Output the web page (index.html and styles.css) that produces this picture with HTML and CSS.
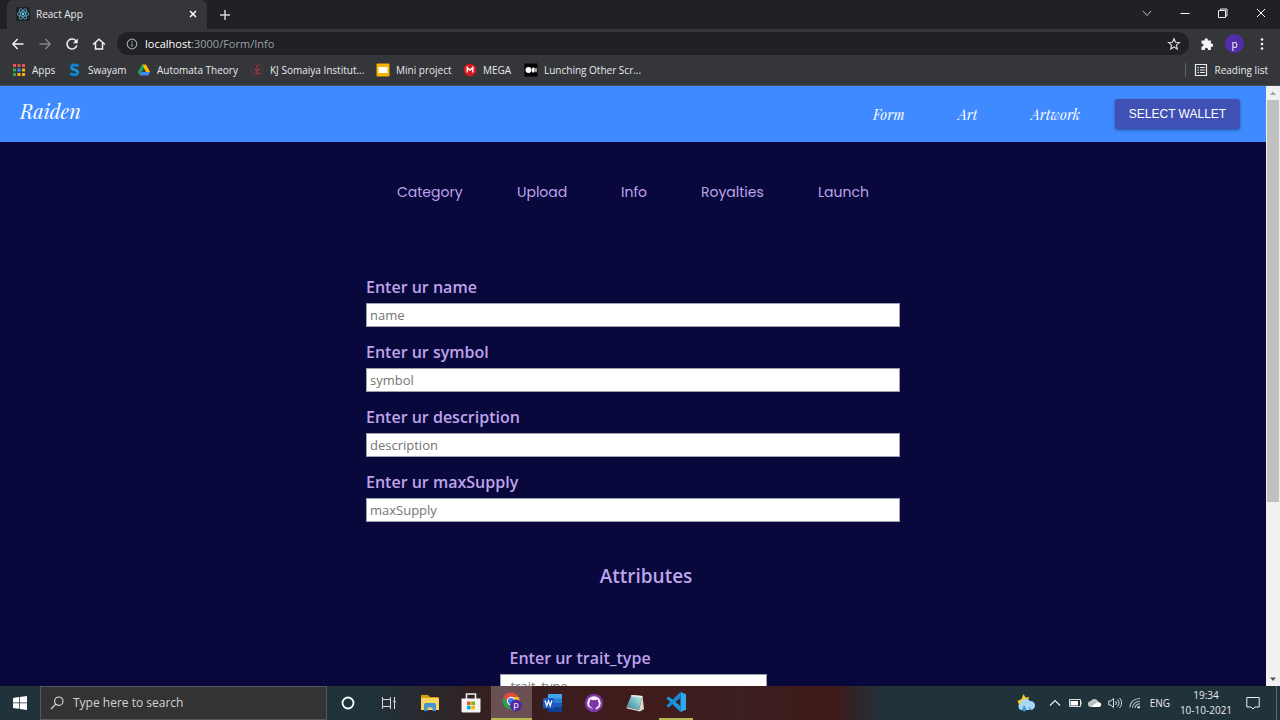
FILE: index.html
```html
<!DOCTYPE html>
<html lang="en">
<head>
<meta charset="utf-8">
<title>React App</title>
<link rel="stylesheet" href="styles.css">
</head>
<body>
<div class="tabstrip">
  <div class="tab">
    <svg class="i14" viewBox="0 0 14 14"><rect width="14" height="14" rx="1" fill="#20232a"/><g fill="none" stroke="#61bfd6" stroke-width=".7"><ellipse cx="7" cy="7" rx="5.8" ry="2.3"/><ellipse cx="7" cy="7" rx="5.8" ry="2.3" transform="rotate(60 7 7)"/><ellipse cx="7" cy="7" rx="5.8" ry="2.3" transform="rotate(120 7 7)"/></g><circle cx="7" cy="7" r="1.2" fill="#61dafb"/></svg>
    <span class="tab-title">React App</span>
    <button class="icon-btn" aria-label="Close tab"><svg class="i10" viewBox="0 0 10 10"><path d="M2 2l6 6M8 2l-6 6" stroke="#fff" stroke-width="1.5"/></svg></button>
  </div>
  <button class="icon-btn newtab" aria-label="New tab"><svg class="i14" viewBox="0 0 14 14"><path d="M7 2v10M2 7h10" stroke="#d0d1d3" stroke-width="1.5"/></svg></button>
  <div class="window-btns">
    <button class="icon-btn" aria-label="Search tabs"><svg class="i14" viewBox="0 0 14 14"><path d="M3 5l4 4.500 4-4.500" fill="none" stroke="#bbb"/></svg></button>
    <button class="icon-btn" aria-label="Minimize"><svg class="i14" viewBox="0 0 14 14"><path d="M2.500 7.500h9" stroke="#fff"/></svg></button>
    <button class="icon-btn" aria-label="Restore"><svg class="i14" viewBox="0 0 14 14"><path d="M2.500 4.500h7V11.500h-7zM4.500 4.500v-1.500h6.500V10H9.500" fill="none" stroke="#eee"/></svg></button>
    <button class="icon-btn" aria-label="Close"><svg class="i14" viewBox="0 0 14 14"><path d="M3 3l8 8M11 3l-8 8" stroke="#fff"/></svg></button>
  </div>
</div>
<div class="toolbar">
  <div class="nav-btns">
    <button class="icon-btn" aria-label="Back"><svg class="i14" viewBox="0 0 14 14"><path d="M12.500 7H2M6.700 2L1.800 7l4.900 5" fill="none" stroke="#f1f3f4" stroke-width="1.400"/></svg></button>
    <button class="icon-btn" aria-label="Forward"><svg class="i14" viewBox="0 0 14 14"><path d="M1.500 7H12M7.300 2l4.900 5-4.900 5" fill="none" stroke="#85878a" stroke-width="1.400"/></svg></button>
    <button class="icon-btn" aria-label="Reload"><svg class="i14" viewBox="0 0 14 14"><path d="M11.800 8.500A5 5 0 1 1 10.800 3.700" fill="none" stroke="#f1f3f4" stroke-width="1.500"/><path d="M12.700 1.500v4.700H8z" fill="#f1f3f4"/></svg></button>
    <button class="icon-btn" aria-label="Home"><svg class="i14" viewBox="0 0 14 14"><path d="M1 7.500l6-5.300 6 5.300M3.500 6v6h7V6" fill="none" stroke="#f1f3f4" stroke-width="1.500"/></svg></button>
  </div>
  <div class="address">
    <svg class="i14" viewBox="0 0 14 14"><circle cx="7" cy="7" r="4.800" fill="none" stroke="#9aa0a6" stroke-width="1.200"/><path d="M7 6.200v3.600M7 4v1.200" stroke="#9aa0a6" stroke-width="1.200"/></svg>
    <span class="url"><span class="host">localhost</span>:3000/Form/Info</span>
    <button class="icon-btn" aria-label="Bookmark"><svg class="i14" viewBox="0 0 14 14"><path d="M7 1.800l1.500 3.500 3.900.3-3 2.500.9 3.800L7 9.900l-3.300 2 .9-3.800-3-2.500 3.900-.3z" fill="none" stroke="#d5d6d8" stroke-width="1.200"/></svg></button>
  </div>
  <div class="tool-btns">
    <button class="icon-btn" aria-label="Extensions"><svg class="i14" viewBox="0 0 14 14"><path d="M1.500 3.500h3V3a1.700 1.700 0 0 1 3.400 0v.500h3v3h.6a1.700 1.700 0 0 1 0 3.400h-.6v3H8v-.5a1.600 1.600 0 0 0-3.200 0v.5H1.500V9.500H2a1.500 1.500 0 0 0 0-3h-.5z" fill="#f4f5f6"/></svg></button>
    <button class="avatar" aria-label="Profile">p</button>
    <button class="icon-btn" aria-label="Menu"><svg class="i14" viewBox="0 0 14 14"><g fill="#f1f3f4"><circle cx="7" cy="2.500" r="1.300"/><circle cx="7" cy="7" r="1.300"/><circle cx="7" cy="11.500" r="1.300"/></g></svg></button>
  </div>
</div>
<div class="bookmarks">
  <a class="mark" href="#"><svg class="i14" viewBox="0 0 14 14"><path d="M1 1h3v3H1zM5.500 1h3v3h-3zM10 1h3v3h-3z" fill="#e2574c"/><path d="M1 5.500h3v3H1z" fill="#34a853"/><path d="M5.500 5.500h3v3h-3z" fill="#4285f4"/><path d="M10 5.500h3v3h-3zM5.500 10h3v3h-3zM10 10h3v3h-3z" fill="#f4b400"/><path d="M1 10h3v3H1z" fill="#34a853"/></svg>Apps</a>
  <a class="mark" href="#"><svg class="i14" viewBox="0 0 14 14"><path d="M10.500 3.300C9 1.500 3.500 1.200 3.500 4.200c0 3.400 6.300 2 6.300 5.100 0 3-5 3-7.600 1.200" fill="none" stroke="#0f83d0" stroke-width="2.900"/><path d="M3.500 4.500C3.800 7.500 9 6.200 9.300 9" fill="none" stroke="#27b3e8"/></svg>Swayam</a>
  <a class="mark" href="#"><svg class="i14" viewBox="0 0 14 14"><path d="M5 1.500h4l4.200 7.500H9z" fill="#fbbc04"/><path d="M5 1.500L.800 9l2 3.500L7 5z" fill="#1ea362"/><path d="M4.800 9h8.400l-2 3.500H2.800z" fill="#4285f4"/></svg>Automata Theory</a>
  <a class="mark" href="#"><svg class="i14" viewBox="0 0 14 14"><circle cx="7" cy="7" r="6" fill="none" stroke="#6c3539" stroke-dasharray="2 1"/><path d="M7 2v9M3.500 10.500h7M4.500 5.500c0 2.500 5 2.500 5 0" stroke="#96383d" fill="none" stroke-width="1.200"/></svg>KJ Somaiya Institut...</a>
  <a class="mark" href="#"><svg class="i14" viewBox="0 0 14 14"><rect x=".5" y=".5" width="13" height="13" rx="1" fill="#f4b400"/><rect x="2.500" y="4" width="9" height="6" fill="#fff"/></svg>Mini project</a>
  <a class="mark" href="#"><svg class="i14" viewBox="0 0 14 14"><circle cx="7" cy="7" r="6.200" fill="#d9171e"/><path d="M4.200 9.500v-5L7 7.300l2.800-2.800v5" fill="none" stroke="#fff" stroke-width="1.400"/></svg>MEGA</a>
  <a class="mark" href="#"><svg class="i14" viewBox="0 0 14 14"><path d="M.5.5h13v13H.5z" fill="#000"/><g fill="#fff"><circle cx="4.500" cy="7" r="3"/><ellipse cx="9.300" cy="7" rx="1.500" ry="2.800"/><ellipse cx="12" cy="7" rx=".7" ry="2.500"/></g></svg>Lunching Other Scr...</a>
  <a class="mark reading" href="#"><svg class="i14" viewBox="0 0 14 14"><path d="M1.500 1.500h11v11h-11zM3.500 4.500H5M6 4.500h4.800M3.500 7H5M6 7h4.800M3.500 9.500H5M6 9.500h4.800" fill="none" stroke="#e8eaed" stroke-width="1.200"/></svg>Reading list</a>
</div>
<div class="viewport">
  <div class="page">
    <header class="site-header">
      <a class="brand" href="#">Raiden</a>
      <nav class="site-nav"><a href="#">Form</a><a href="#">Art</a><a href="#">Artwork</a></nav>
      <button class="wallet">SELECT WALLET</button>
    </header>
    <nav class="steps"><a href="#">Category</a><a href="#">Upload</a><a href="#">Info</a><a href="#">Royalties</a><a href="#">Launch</a></nav>
    <form class="form">
      <div class="field"><label for="name">Enter ur name</label><input id="name" placeholder="name"></div>
      <div class="field"><label for="symbol">Enter ur symbol</label><input id="symbol" placeholder="symbol"></div>
      <div class="field"><label for="description">Enter ur description</label><input id="description" placeholder="description"></div>
      <div class="field"><label for="supply">Enter ur maxSupply</label><input id="supply" placeholder="maxSupply"></div>
      <h2 class="attributes">Attributes</h2>
      <div class="field trait"><label for="trait">Enter ur trait_type</label><input id="trait" placeholder="trait_type"></div>
    </form>
  </div>
  <div class="scrollbar">
    <svg class="arrow" viewBox="0 0 14 14"><path d="M4 9l3-3.500L10 9z" fill="#a3a3a3"/></svg>
    <div class="thumb"></div>
    <svg class="arrow" viewBox="0 0 14 14"><path d="M4 5.500L7 9l3-3.500z" fill="#505050"/></svg>
  </div>
</div>
<div class="taskbar">
  <button class="task start" aria-label="Start"><svg class="i14" viewBox="0 0 14 14"><path d="M0 2l6-.9v5.500H0zM6.700 1L14 0v6.600H6.700zM0 7.300h6v5.500L0 12zM6.700 7.300H14V14l-7.300-1z" fill="#fff"/></svg></button>
  <label class="search"><svg class="i14" viewBox="0 0 14 14"><circle cx="8.800" cy="5.200" r="4.200" fill="none" stroke="#ddd" stroke-width="1.100"/><path d="M5.700 8.200L1 13" stroke="#ddd" stroke-width="1.100"/></svg><input placeholder="Type here to search" aria-label="Search"></label>
  <div class="apps">
    <button class="task" aria-label="Cortana"><svg class="i20" viewBox="0 0 20 20"><circle cx="10" cy="10" r="5.500" fill="none" stroke="#fff" stroke-width="1.800"/></svg></button>
    <button class="task" aria-label="Task view"><svg class="i20" viewBox="0 0 20 20"><path d="M3.500 4v2.500h8V4M3.500 16v-2.500h8V16M3.500 6.500v7M11.500 6.500v7M15.500 4v3M15.500 10v6" fill="none" stroke="#ddd"/><path d="M14.500 7.500h2v2h-2z" fill="#fff"/></svg></button>
    <button class="task" aria-label="File Explorer"><svg class="i20" viewBox="0 0 20 20"><path d="M1 2h7l2 2h8.500v4H1z" fill="#d99b14"/><path d="M1 5h18v12H1z" fill="#fcd462"/><path d="M4 18v-7l1.500-1h9l1.500 1v7h-3.500v-3.500h-5V18z" fill="#4595d1"/></svg></button>
    <button class="task" aria-label="Microsoft Store"><svg class="i20" viewBox="0 0 20 20"><path d="M5.500 6V1h9v5" fill="none" stroke="#eee" stroke-width="1.600"/><path d="M.500 5.500h19V18a1.500 1.500 0 0 1-1.500 1.500H2A1.500 1.500 0 0 1 .500 18z" fill="#f3f3f3"/><path d="M6 8.500h3.600v3.600H6z" fill="#f25022"/><path d="M10.300 8.500H14v3.600h-3.700z" fill="#7fba00"/><path d="M6 12.800h3.600v3.600H6z" fill="#00a4ef"/><path d="M10.300 12.800H14v3.600h-3.700z" fill="#ffb900"/></svg></button>
    <button class="task active" aria-label="Chrome"><svg class="i20" viewBox="0 0 20 20"><path d="M9 9L1.600 4.800A8.500 8.500 0 0 0 8.500 17.500L12 11z" fill="#2d9d4e"/><path d="M1.600 4.800A8.500 8.500 0 0 1 16.500 5H9L5 10z" fill="#e24a3b"/><path d="M16.500 5H9l3.500 6L8.500 17.500A8.500 8.500 0 0 0 16.500 5z" fill="#fbc116"/><circle cx="9" cy="9" r="4.200" fill="#fff"/><circle cx="9" cy="9" r="3.300" fill="#4285f4"/><circle cx="14" cy="13.500" r="6" fill="#51289e"/><text x="14" y="16" class="mini">p</text></svg></button>
    <button class="task" aria-label="Word"><svg class="i20" viewBox="0 0 20 20"><path d="M5 1h14v5H5z" fill="#41a5ee"/><path d="M5 5.500h14V10H5z" fill="#2b7cd3"/><path d="M5 10h14v4.500H5z" fill="#185abd"/><path d="M5 14.500h14V19H5z" fill="#103f91"/><rect y="5" width="11" height="10.500" rx="1" fill="#185abd"/><path d="M2 7.500l1.800 5.300 1.700-5 1.700 5L9 7.500" fill="none" stroke="#fff" stroke-width="1.200"/></svg></button>
    <button class="task" aria-label="GitHub"><svg class="i20" viewBox="0 0 20 20"><circle cx="10" cy="10" r="9.200" fill="#7d35a5"/><circle cx="10" cy="10" r="6.800" fill="#f7f2fa"/><path d="M8.200 17.500v-3c-2-.4-3-1.700-3-3.800 0-1 .3-1.600.8-2.200-.2-.8-.1-1.500.2-2.100.8 0 1.400.4 2 .9a7 7 0 0 1 3.600 0c.6-.5 1.200-.9 2-.9.300.6.400 1.300.2 2.100.500.600.800 1.200.8 2.200 0 2.100-1 3.400-3 3.800v3z" fill="#7d35a5"/><path d="M8 15.500c-2 .3-2-1-3-1.500" fill="none" stroke="#7d35a5"/></svg></button>
    <button class="task" aria-label="Notepad"><svg class="i20" viewBox="0 0 20 20"><defs><linearGradient id="paper" x1="1" y1="0" x2="0" y2="1"><stop stop-color="#d2f1ec"/><stop offset=".5" stop-color="#75b9c3"/><stop offset="1" stop-color="#37848f"/></linearGradient></defs><path d="M6.500 2l11 1-3.500 14L1.500 14z" fill="url(#paper)"/><path d="M6.500 2L17.500 3l-.3 1.400L6 3.200z" fill="#f1eee6"/><path d="M1.500 14L14 17l1 1.500-13-3zM17.500 3l1.500 13-4 2.500-1-1.500z" fill="#dcd8cd"/></svg></button>
    <button class="task open" aria-label="VS Code"><svg class="i20" viewBox="0 0 20 20"><path d="M14.500 0L20 2.300v15.400L14.500 20z" fill="#29a9f2"/><path d="M14.500 0v6L2.500 15.500.300 13.700z" fill="#1689d2"/><path d="M.300 6.300l2.200-1.800 12 9.500v6z" fill="#1c93dc"/></svg></button>
  </div>
  <div class="tray">
    <svg class="i20" viewBox="0 0 20 20"><path d="M7.500 1l2 3.500 4-.5-2.500 3.500 1 4H3L1.500 8 5.500 6z" fill="#fccb28"/><path d="M5 17a4 4 0 0 1 0-7.500 5 5 0 0 1 9-1.500 4.500 4.500 0 0 1 1 9z" fill="#a9d8f5"/><path d="M8 12l2 3.500a2 2 0 1 1-3.500 0zM14 13.500l1.300 3.500h-2.500z" fill="#3c98dd"/></svg>
    <svg class="i14" viewBox="0 0 14 14"><path d="M2 9.500L7 4.500l5 5" fill="none" stroke="#eee" stroke-width="1.200"/></svg>
    <svg class="i14" viewBox="0 0 14 14"><path d="M1.500 3.500h11v7h-11z" fill="none" stroke="#ddd"/><path d="M2.500 5h7.500v4.500H2.500zM12.500 5.500h1v3h-1z" fill="#fff"/></svg>
    <svg class="i14" viewBox="0 0 14 14"><path d="M3 11a3 3 0 0 1-.2-6 4.200 4.200 0 0 1 7.700 1A2.600 2.600 0 0 1 11 11z" fill="#bfc3c4"/><path d="M3 11L9 6.500c4-1.500 6 3.500 2 4.500z" fill="#fff"/></svg>
    <svg class="i14" viewBox="0 0 14 14"><path d="M.8 5h2L5.500 2.500v9L2.800 9h-2zM7.500 5c1 1 1 3 0 4M9.500 3.500c2 2 2 5 0 7M11.500 2c2.800 3 2.800 7 0 10" fill="none" stroke="#ddd"/></svg>
    <svg class="i14" viewBox="0 0 14 14"><path d="M2 11.500C2 6 6.500 2.500 12 2.500M4.500 12C4.500 8 8 5.200 12 5.200M7 12c0-2.500 2.500-4.200 5-4.200M9.500 12c0-1.200 1-2 2.500-2" fill="none" stroke="#b9c0c2" stroke-width="1.100"/><circle cx="11" cy="11.500" r="1" fill="#eee"/></svg>
    <span class="lang">ENG</span>
    <div class="clock"><span>19:34</span><span>10-10-2021</span></div>
    <svg class="i14 notify" viewBox="0 0 14 14"><path d="M.8 1.500h12.400v9.500H9L7 13l-2-2H.8z" fill="none" stroke="#eee"/></svg>
  </div>
</div>
</body>
</html>
```

FILE: styles.css
```css
* { box-sizing: border-box; }
body {
  margin: 0;
  height: 100vh;
  display: flex;
  flex-direction: column;
  overflow: hidden;
  background: #35363a;
  color: #e8eaed;
  font: 10px/14px "Segoe UI", "Open Sans", sans-serif;
}
a { color: inherit; text-decoration: none; }
button, input { font: inherit; color: inherit; }
svg { display: block; flex: none; }
.i10 { width: 10px; height: 10px; }
.i14 { width: 14px; height: 14px; }
.i20 { width: 20px; height: 20px; }
.icon-btn { padding: 0; border: 0; background: none; }

.tabstrip { display: flex; align-items: center; height: 29px; padding-left: 7px; background: #202124; flex: none; }
.tab { display: flex; align-items: center; gap: 6px; width: 200px; height: 29px; padding: 0 9px 2px; border-radius: 6px 6px 0 0; background: #35363a; }
.tab-title { flex: 1; }
.newtab { margin-left: 11px; }
.window-btns { display: flex; gap: 24px; margin-left: auto; padding: 0 12px 4px 0; }

.toolbar { display: flex; align-items: center; height: 29px; padding: 0 11px; gap: 11px; flex: none; }
.nav-btns { display: flex; gap: 13px; }
.address { flex: 1; display: flex; align-items: center; gap: 6px; height: 23px; padding: 0 8px; border-radius: 12px; background: #202124; }
.url { flex: 1; color: #9aa0a6; font-size: 11px; line-height: 16px; }
.host { color: #fff; }
.tool-btns { display: flex; align-items: center; gap: 11px; }
.avatar { width: 19px; height: 19px; padding: 0; border: 0; border-radius: 50%; background: #512da8; color: #fff; line-height: 16px; }

.bookmarks { display: grid; grid-template-columns: 56px 69px 113px 126px 87px 61px auto 1fr; align-items: center; height: 28px; padding: 0 12px 3px; border-bottom: 1px solid #4b4d51; flex: none; }
.mark { display: flex; align-items: center; gap: 6px; white-space: nowrap; }
.reading { justify-self: end; padding-left: 8px; border-left: 1px solid #5f6368; }

.viewport { flex: 1; min-height: 0; display: flex; background: #08083c; }
.page { flex: 1; overflow: hidden; }
.site-header { display: flex; align-items: center; height: 56px; padding: 0 26px 0 20px; background: #3f8aff; color: #fff; }
.brand { flex: 1; padding-bottom: 6px; font: italic 20px/28px "Playfair Display", "Liberation Serif", serif; }
.site-nav { display: grid; grid-template-columns: 85px 73px 84px; padding-top: 2px; font: italic 14px/20px "Playfair Display", "Liberation Serif", serif; }
.wallet { width: 125px; height: 30px; padding: 0; border: 0; border-radius: 3px; background: #3f51b5; box-shadow: 0 1px 3px #0006; font: 12px/20px "Liberation Sans", Arial, sans-serif; }
.steps { display: grid; grid-template-columns: 120px 104px 80px 117px 51px; justify-content: center; padding: 40px 0 72px; color: #bfa3ea; font: 14px/20px Poppins, Inter, sans-serif; }

.form { display: flex; flex-direction: column; gap: 12px; max-width: 534px; margin: 0 auto; color: #bfa3ea; }
.field { display: flex; flex-direction: column; gap: 3px; }
.field label { font-size: 16px; line-height: 26px; font-weight: 600; }
.form input { width: 100%; height: 24px; padding: 0 3px; border: 1px solid #a0a0ac; border-radius: 0; background: #fff; color: #222; font-size: 13px; }
.form input::placeholder { color: #757575; opacity: 1; }
.attributes { margin: 29px 0 44px; padding-left: 26px; text-align: center; font-size: 19px; line-height: 26px; font-weight: 600; }
.trait { align-self: center; width: 50%; }
.trait label { padding-left: 10px; }
.form .trait input { padding-left: 10px; }

.scrollbar { display: flex; flex-direction: column; width: 14px; background: #f1f1f1; }
.arrow { width: 14px; height: 14px; }
.thumb { width: 12px; height: 67%; margin: 0 auto auto; background: #c1c1c1; }

.taskbar { display: flex; align-items: center; height: 34px; flex: none; background: linear-gradient(90deg, #20323a 0 29%, #351f1f 38%, #421b1c 50%, #3b1f21 58%, #3f1917 65%, #20323a 69%); }
.task { display: grid; place-items: center; width: 41px; height: 34px; padding: 0; border: 0; background: none; }
.start { width: 40px; }
.search { display: flex; align-items: center; gap: 9px; width: 287px; height: 34px; padding-left: 9px; border: 1px solid #56595a; background: #333; }
.search input { flex: 1; min-width: 0; padding: 0; border: 0; background: none; font-size: 12px; }
.search input::placeholder { color: #d4d4d4; opacity: 1; }
.apps { display: flex; }
.active { background: #6a5052; border-bottom: 2px solid #b5b94f; }
.open { width: 34px; margin-left: 4px; border-bottom: 2px solid #b5b94f; }
.mini { fill: #fff; font-size: 9px; text-anchor: middle; }
.tray { display: flex; align-items: center; gap: 6px; height: 34px; margin: 0 3px 0 auto; padding-right: 16px; border-right: 1px solid #5c6a70; }
.tray > :first-child { margin-right: 6px; }
.lang { margin-left: 2px; }
.clock { display: flex; flex-direction: column; align-items: center; width: 60px; line-height: 15px; }
.notify { margin-left: 4px; }
```
